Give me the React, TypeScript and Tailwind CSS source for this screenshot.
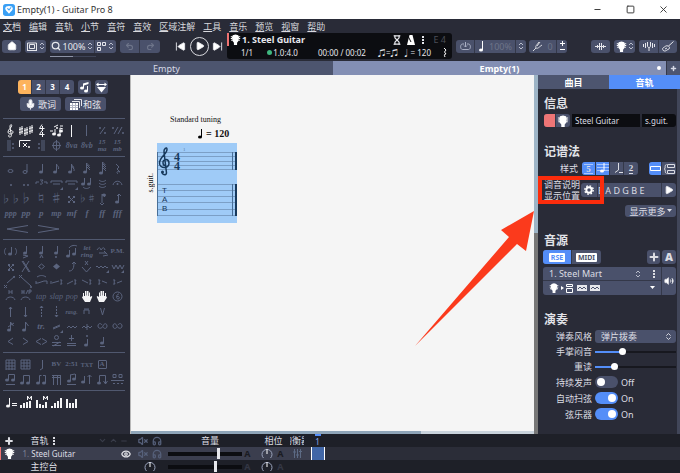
import { useState, type FC, type ReactNode } from "react";
import {
  ChevronDown,
  ChevronUp,
  ChevronsUpDown,
  Eye,
  Headphones,
  Home,
  Hourglass,
  Mic,
  Minus,
  MoreVertical,
  Play,
  Plus,
  Redo2,
  Search,
  SkipBack,
  SkipForward,
  Square,
  Undo2,
  Volume2,
  VolumeX,
  X,
} from "lucide-react";

// filled note head centred on x, y
const head = (x: number, y: number) =>
  `M${x - 2} ${y}a2 1.5 0 1 0 4 0a2 1.5 0 1 0 -4 0`;

const dot = (x: number, y: number) =>
  `M${x - 1} ${y}a1 1 0 1 0 2 0a1 1 0 1 0 -2 0`;

interface PaletteItem {
  name: string;
  stroke?: string;
  fill?: string;
  text?: string;
  sub?: string;
  textClass?: string;
  bright?: boolean;
}

const DYN = "font-['Liberation_Serif'] italic font-bold text-[9px]";
const TINY = "font-['Liberation_Serif'] italic text-[8px]";
const SERIF = "font-['Liberation_Serif'] font-bold text-[7px]";
const STACKED = "font-['Liberation_Serif'] italic font-bold text-[7px] leading-[7px]";

const CLEF =
  "M7 14c-2 0-2-2-.5-2M7 14c1 0 1.500-1 1.300-2L7 4c-.3-2 1.500-3.500 1.700-1.500C8.800 4.500 5 6.500 5 9c0 2.500 5 2.700 5 .2C10 7 6.500 7 6.700 9";

const PALETTE: PaletteItem[][][] = [
  [
    [
      { name: "Clef", stroke: CLEF, bright: true },
      {
        name: "Key signature",
        stroke:
          "M2 4v8M4 3v8M1 6.500l4-1M1 9.500l4-1M7 5v8M9 4v8M6 7.500l4-1M6 10.500l4-1M12 3v8M14 2v8M11 5.500l4-1M11 8.500l4-1",
        bright: true,
      },
      {
        name: "Time signature",
        stroke: "M8 1.500L5.500 5.500h5M8.500 3v5M8 7.500L5.500 11.500h5M8.500 9v5",
        bright: true,
      },
      {
        name: "Triplet feel",
        stroke: "M6 11V6M11 12V5l3 1M5 4l4-2M11 3h3M1 8h3",
        fill: head(5, 11) + head(10, 12) + head(12, 8) + dot(8, 5),
        bright: true,
      },
      { name: "Bar line", stroke: "M7.500 2v12", bright: true },
      { name: "Free bar", stroke: "M7.500 2v11" },
      { name: "Repeat bar", stroke: "M5 11l5-7", fill: dot(5, 5) + dot(10, 10) },
      {
        name: "Repeat two bars",
        stroke: "M4 11l4-7M8 11l4-7",
        fill: dot(3, 5) + dot(13, 10),
      },
    ],
    [
      { name: "Repeat open", stroke: "M5 2v11M7 2v11", fill: dot(10, 6) + dot(10, 10) },
      {
        name: "Alternate ending",
        stroke: "M1.500 9V2.500h11M5 5l4 4M9 5L5 9",
        fill: dot(11, 9),
        bright: true,
      },
      { name: "Repeat close", stroke: "M10 2v11M8 2v11", fill: dot(5, 6) + dot(5, 10) },
      { name: "Directions", stroke: "M7.500 2v11M3 7.500h9M4 7.500a3.500 4 0 1 0 7 0a3.500 4 0 1 0-7 0" },
      { name: "Octave up", text: "8va", textClass: "font-['Liberation_Serif'] italic font-bold text-[8px]" },
      { name: "Octave down", text: "8vb", textClass: "font-['Liberation_Serif'] italic font-bold text-[8px]" },
      { name: "Quindicesima up", text: "15", sub: "ma", textClass: STACKED },
      { name: "Quindicesima down", text: "15", sub: "mb", textClass: STACKED },
    ],
  ],
  [
    [
      { name: "Whole", stroke: "M5 10a2.500 1.500 0 1 0 5 0a2.500 1.500 0 1 0-5 0" },
      { name: "Half", stroke: "M5 11a2 1.500 0 1 0 4 0a2 1.500 0 1 0-4 0M9 11V3" },
      { name: "Quarter", stroke: "M8.500 11V3", fill: head(7, 11) },
      { name: "Eighth", stroke: "M7.500 11V3c0 2 3 2 2 5", fill: head(6, 11) },
      { name: "16th", stroke: "M7.500 11V3c0 2 3 2 2 5M8 5c0 2 3 2 2 5", fill: head(6, 11) },
      { name: "32nd", stroke: "M7.500 11V2l3 3M8 4l3 3M8 6l3 3", fill: head(6, 11) },
      { name: "64th", stroke: "M7.500 12V1l3 3M8 3l3 3M8 5l3 3M8 7l3 3", fill: head(6, 12) },
      { name: "Rest", stroke: "M6 3l3 3-2 2 3 3c-3-1-4 0-2 2" },
    ],
    [
      { name: "Dotted", fill: dot(8, 9) },
      { name: "Double dotted", fill: dot(6, 9) + dot(10, 9) },
      { name: "Triplet", stroke: "M2 8V6h3M10 6h3v2M6 4h3L7.500 6C9 6 9 9 6 8" },
      { name: "Tuplet", stroke: "M2 7V5h11v2M4 8h7", fill: "M14 11v3h-3z" },
      { name: "Custom tuplet", stroke: "M2 7V5h11v2M4 8h7", fill: "M14 11v3h-3z" },
      { name: "Tie", stroke: "M5.500 8V2M11.500 8V2M4 11c2 2 5 2 7 0", fill: head(4, 8) + head(10, 8) },
      { name: "Tie chord", stroke: "M4 4c2 2 5 2 7 0M4 7c2 2 5 2 7 0M4 10c2 2 5 2 7 0" },
      { name: "Fermata", stroke: "M3 9c1-5 8-5 9 0", fill: dot(7.5, 8) },
    ],
    [
      { name: "Double flat", text: "♭♭", textClass: "text-[10px]" },
      { name: "Flat", text: "♭", textClass: "text-[12px]" },
      { name: "Natural", text: "♮", textClass: "text-[12px]" },
      { name: "Sharp", text: "♯", textClass: "text-[12px]" },
      { name: "Double sharp", stroke: "M5 6l5 5M10 6l-5 5", fill: "M4 5h2v2H4zM9 5h2v2H9zM4 10h2v2H4zM9 10h2v2H9z" },
      { name: "Enharmonic", text: "♭♯", textClass: "text-[9px]" },
      { name: "Stem up", stroke: "M7 12V3M7 3l3 3M5 12l2 2 2-2", fill: head(9, 4) },
      { name: "Stem down", stroke: "M8.500 12V3M7 5l2-2 2 2", fill: head(7, 11) },
    ],
    [
      { name: "Pianississimo", text: "ppp", textClass: "font-['Liberation_Serif'] italic font-bold text-[8px]" },
      { name: "Pianissimo", text: "pp", textClass: DYN },
      { name: "Piano", text: "p", textClass: DYN },
      { name: "Mezzo-piano", text: "mp", textClass: "font-['Liberation_Serif'] italic font-bold text-[8px]" },
      { name: "Mezzo-forte", text: "mf", textClass: DYN },
      { name: "Forte", text: "f", textClass: DYN },
      { name: "Fortissimo", text: "ff", textClass: DYN },
      { name: "Fortississimo", text: "fff", textClass: DYN },
    ],
  ],
  [
    [
      { name: "Ghost note", stroke: "M3 4c-2 2-2 5 0 7M12 4c2 2 2 5 0 7M8.500 10V3", fill: head(7, 10) },
      { name: "Accent", stroke: "M8.500 9V2M5 11l5 1-5 2", fill: head(7, 9) },
      { name: "Heavy accent", stroke: "M8.500 9V2M6 14l1.500-3L9 14", fill: head(7, 9) },
      { name: "Staccato", stroke: "M8.500 9V2", fill: head(7, 9) + dot(7, 13) },
      { name: "Legato", stroke: "M5.500 12V6M11.500 10V4M5 4c2-3 6-3 8-2", fill: head(4, 12) + head(10, 10) },
      { name: "Let ring", text: "let", sub: "ring", textClass: STACKED },
      { name: "Let ring on chord", stroke: "M2 6c2-3 3-3 4 0M6 6c2-3 3-3 4 0M4 9h7M8 12l5-1M9 7l3 3" },
      { name: "Palm mute", text: "P.M.", textClass: SERIF },
    ],
    [
      { name: "Dead note", stroke: "M5 6l5 5M10 6l-5 5", fill: "M5 5h2v2H5zM9 5h2v2H9zM5 10h2v2H5zM9 10h2v2H9z" },
      { name: "Dead strum", stroke: "M4 2l7 11M11 2L4 13M5 2l7 11" },
      { name: "Natural harmonic", stroke: "M4.500 7.500l3-2.500 3 2.500-3 2.500z" },
      { name: "Artificial harmonic", fill: "M4 7.500l3.500-3 3.500 3-3.500 3z" },
      { name: "Bend", stroke: "M5 12c4 0 5-3 5-9M8 5l2-2 2 2" },
      { name: "Tremolo bar", stroke: "M3 8l4.500 5L12 8M6 2l3 4M9 2L6 6" },
      { name: "Vibrato", stroke: "M1 8q1-2 2 0t2 0 2 0 2 0 2 0 2 0", fill: "M14 11v3h-3z" },
      { name: "Wide vibrato", stroke: "M2 6l2 4 2-4 2 4 2-4 2 4 2-4", fill: "M14 11v3h-3z" },
    ],
    [
      { name: "Whammy dive", stroke: "M4 9l8-7M1 11l3 3M4 11l-3 3", fill: dot(11, 3) },
      { name: "Whammy dip", stroke: "M3 3l10 9M1 1l3 3M4 1L1 4", fill: dot(13, 13) },
      { name: "Legato slide", stroke: "M2 9h2l6-2h3M13 7v3M2 7v3M3 3c3-2 6-2 9 0" },
      { name: "Shift slide", stroke: "M2 7v3M3 9l7-2M11 6h2l-1 2 1 2h-2" },
      { name: "Slide out down", stroke: "M3 10l6-3M10 6h2l-1 2 1 2h-2" },
      { name: "Slide out up", stroke: "M3 6l6 3M10 6h2l-1 2 1 2h-2" },
      { name: "Slide in below", stroke: "M3 6h2L4 8l1 2H3M7 7l5 2" },
      { name: "Slide in above", stroke: "M3 6h2L4 8l1 2H3M7 9l5-2" },
    ],
    [
      { name: "Hammer on", stroke: "M3 11c1-4 8-4 9 0M6 1v4M9 1v4M6 3h3" },
      { name: "Hammer on and pull off", stroke: "M3 11c1-4 8-4 9 0M4 1v4M6 1v4M4 3h2M8 5l2-4M11 5V1h2v2h-2" },
      { name: "Tapping", text: "tap", textClass: TINY },
      { name: "Slap", text: "slap", textClass: TINY },
      { name: "Pop", text: "pop", textClass: TINY },
      {
        name: "Left hand fingering",
        fill: "M4 7V4h1v3h1V2h1.500v4.500h.5V2h1.500v5h.5V3.500h1V8l1.500-1 .8.8L11 13H6L3 8.500z",
        bright: true,
      },
      {
        name: "Right hand fingering",
        fill: "M11 7V4h-1v3H9V2H7.500v4.500H7V2H5.500v5H5V3.500H4V8L2.500 7l-.8.8L4 13h5l3-4.500z",
        bright: true,
      },
      { name: "String number", stroke: "M3 7.500a4.500 4.500 0 1 0 9 0a4.500 4.500 0 1 0-9 0M9 5c-3 0-3 5-1 5s2-3-1-2.500" },
    ],
    [
      { name: "Brush up", stroke: "M7.500 13V3M6 5l1.500-2L9 5" },
      { name: "Brush down", stroke: "M7.500 3v10M6 11l1.500 2L9 11" },
      { name: "Arpeggio up", stroke: "M7.500 2v2M7.500 5v2M7.500 8v2M7.500 11v2M6 4l1.500-2L9 4" },
      { name: "Arpeggio down", stroke: "M7.500 2v2M7.500 5v2M7.500 8v2M7.500 11v2M6 11l1.500 2L9 11" },
      { name: "Rasgueado", text: "rasg.", textClass: "font-['Liberation_Serif'] italic font-bold text-[6px]" },
      { name: "Pickstroke down", stroke: "M5 10V6h5v4M5 5h5" },
      { name: "Pickstroke up", stroke: "M5.500 4l2 7 2-7" },
    ],
    [
      { name: "Grace before beat", stroke: "M7.500 11V3l3 4M5 8l6-4", fill: head(6, 11) },
      { name: "Grace on beat", stroke: "M7.500 11V3l3 4", fill: head(6, 11) },
      { name: "Trill", text: "tr.", textClass: DYN },
      { name: "Tremolo picking", stroke: "M4 9l7-3M4 10l7-3", fill: "M14 11v3h-3z" },
      { name: "Upper mordent", stroke: "M3 9l2-2 2 2 2-2 2 2 2-2" },
      { name: "Lower mordent", stroke: "M3 9l2-2 2 2 2-2 2 2 2-2M8 5v6" },
      { name: "Turn", stroke: "M7 6c-1-2-4-2-4 1s4 3 5 0 4-3 4 0-3 3-4 1" },
      { name: "Inverted turn", stroke: "M8 6c1-2 4-2 4 1s-4 3-5 0-4-3-4 0 3 3 4 1" },
    ],
    [
      { name: "Crescendo fade", stroke: "M10 4L5 7.500l5 3" },
      { name: "Decrescendo fade", stroke: "M5 4l5 3.500-5 3" },
      { name: "Volume swell", stroke: "M7 4.500l-5 3 5 3M8 4.500l5 3-5 3" },
      { name: "Open wah", stroke: "M5.500 3.500a2 2 0 1 0 4 0a2 2 0 1 0-4 0M3 8.500h9M3 11.500h9M4 12l7-4" },
      { name: "Closed wah", stroke: "M7.500 1v6M5 4.500h5M3 9.500h9M3 11.500h9" },
      { name: "Golpe thumb", stroke: "M8.500 11V5", fill: head(7, 11) + dot(8, 2) },
      { name: "Golpe finger", stroke: "M8.500 9V3M5 12.500h5", fill: head(7, 9) },
    ],
  ],
  [
    [
      { name: "Chord diagram", stroke: "M3 3h9M3 6h9M3 9h9M3 12h9M3 3v10M6 3v10M9 3v10M12 3v10" },
      { name: "Scale diagram", stroke: "M3 3h9M3 6h9M3 9h9M3 12h9M3 3v9M6 3v9M9 3v9M12 3v9" },
      { name: "Slash", stroke: "M8.500 3v8M9 11l-3 2" },
      { name: "Barre", text: "BV", textClass: SERIF },
      { name: "Timer", text: "2:51", textClass: SERIF },
      { name: "Text", text: "TXT", textClass: "font-['Liberation_Serif'] font-bold text-[6px]" },
      { name: "Section", text: "A", textClass: "font-['Liberation_Serif'] font-bold text-[7px] border border-current px-px leading-[7px] rounded-[1px]" },
    ],
    [
      { name: "Automatic beam", stroke: "M5.500 8V2.500h6V8M3 12.500h9", fill: head(4, 8) + head(10, 8) },
      { name: "Force beam", stroke: "M5.500 11V3.500h6V11", fill: head(4, 11) + head(10, 11) },
      { name: "Break beam", stroke: "M5.500 11V3.500h2M9 3.500h2.500V11", fill: head(4, 11) + head(10, 11) },
      { name: "Break secondary beam", stroke: "M3 3.500h9M3 5.500h9M4.500 3v10M8.500 3v10M11.500 3v10" },
      { name: "Automatic stem", stroke: "M6.500 9V3M11.500 7V2M3 12.500h9M6 3l5-1", fill: head(5, 9) + head(10, 7) },
      { name: "Invert stem", stroke: "M5.500 11V4M10.500 12V3M8.500 5l2-2 2 2", fill: head(4, 10) },
      { name: "Flip beam", stroke: "M4.500 12V3.500h6V12M8.500 9l2 3 2-3", fill: head(4, 11) },
      { name: "Group staves", stroke: "M1 8.500h13M3 2.500h3v3H3zM9 2.500h3v3H9zM3 11.500h2M7 11.500h2M11 11.500h2" },
    ],
  ],
  [
    [
      { name: "Tempo", stroke: "M6.500 11V3M9 8.500h5M9 10.500h5", fill: head(5, 11), bright: true },
      { name: "Master volume", stroke: "M9.500 5V1l2 3 2-3v4", fill: "M2 10h2v3H2zM5 8h2v5H5zM8 7h2v6H8zM11 6h2v7h-2z", bright: true },
      { name: "Master pan", stroke: "M9.500 5V1l2 3 2-3v4", fill: "M2 5h2v8H2zM5 9h2v4H5zM8 10h2v3H8zM11 7h2v6h-2z", bright: true },
      { name: "Track volume", fill: "M2 11h2v2H2zM5 8h2v5H5zM8 6h2v7H8zM11 3h2v10h-2z", bright: true },
      { name: "Track pan", fill: "M2 4h2v9H2zM5 8h2v5H5zM8 8h2v5H8zM11 4h2v9h-2z", bright: true },
    ],
  ],
];

const PaletteButton: FC<{ item: PaletteItem }> = ({ item }) => (
  <button
    aria-label={item.name}
    className={`flex h-[15px] min-w-0 items-center justify-center whitespace-nowrap ${
      item.bright ? "text-[#f4f4f6]" : "text-[#5b647e]"
    }`}
  >
    {item.text ? (
      <span className={`flex flex-col items-center ${item.textClass}`}>
        <span>{item.text}</span>
        {item.sub && <span>{item.sub}</span>}
      </span>
    ) : (
      <svg width="15" height="15" viewBox="0 0 15 15" className="shrink-0">
        {item.stroke && <path d={item.stroke} fill="none" stroke="currentColor" />}
        {item.fill && <path d={item.fill} fill="currentColor" />}
      </svg>
    )}
  </button>
);

const HeadstockIcon: FC<{ size?: number }> = ({ size = 13 }) => (
  <svg width={size} height={size} viewBox="0 0 14 14" fill="#fff" className="shrink-0">
    <path d="M3.500 1.500L7 .5l3.500 1L11.500 4l-.8 5L9 11v3H5v-3L3.300 9 2.500 4z" />
    <path d="M1 3h2v1.200H1zM1 5.200h2v1.200H1zM1.500 7.400h2v1.200h-2zM11 3h2v1.200h-2zM11 5.200h2v1.200h-2zM10.500 7.400h2v1.200h-2z" />
  </svg>
);

const UpDown: FC = () => (
  <svg width="6" height="8" viewBox="0 0 6 8" fill="none" stroke="#b9bdcc" className="shrink-0">
    <path d="M1 3l2-2 2 2M1 5l2 2 2-2" />
  </svg>
);

const DotsIcon: FC<{ className?: string }> = ({ className = "" }) => (
  <svg width="2" height="8" viewBox="0 0 2 8" fill="currentColor" className={`shrink-0 ${className}`}>
    <path d="M0 0h2v2H0zM0 3h2v2H0zM0 6h2v2H0z" />
  </svg>
);

const Group: FC<{ className?: string; children: ReactNode }> = ({ className = "", children }) => (
  <div
    className={`flex h-[13px] items-center divide-x divide-[#343849] overflow-hidden rounded-[3px] bg-[#4a516b] ${className}`}
  >
    {children}
  </div>
);

const ToolButton: FC<{ label: string; className?: string; children: ReactNode }> = ({
  label,
  className = "",
  children,
}) => (
  <button aria-label={label} className={`flex h-full items-center justify-center ${className}`}>
    {children}
  </button>
);

const TitleBar: FC = () => (
  <header className="flex h-[19px] items-center bg-white pl-[3px] text-[9px] text-[#333]">
    <svg width="12" height="12" viewBox="0 0 11 11" className="mr-0.5">
      <rect width="11" height="11" rx="2.500" fill="#3aa0f5" />
      <path d="M2 4c0-3 7-3 7 0 0 2-2 3-3.500 5C4 7 2 6 2 4z" fill="#fff" />
      <path d="M4 4l1.500 1.500L7.500 3" fill="none" stroke="#3aa0f5" />
    </svg>
    <h1 className="flex-1">Empty(1) - Guitar Pro 8</h1>
    <button aria-label="Minimize" className="flex w-[33px] justify-center">
      <Minus size={9} strokeWidth={2.5} />
    </button>
    <button aria-label="Maximize" className="flex w-[33px] justify-center">
      <Square size={9} strokeWidth={2.5} />
    </button>
    <button aria-label="Close" className="flex w-[33px] justify-center">
      <X size={11} strokeWidth={2} />
    </button>
  </header>
);

const MENUS = ["文档", "编辑", "音轨", "小节", "音符", "音效", "区域注解", "工具", "音乐", "预览", "视窗", "帮助"];

const Toolbar: FC = () => (
  <div className="h-[42px]">
    <nav className="flex h-[14px] items-center gap-2 pl-[3px] text-[9px] text-[#d8d9de]">
      {MENUS.map((menu) => (
        <button key={menu}>
          <span className="underline underline-offset-1">{menu[0]}</span>
          {menu.slice(1)}
        </button>
      ))}
    </nav>
    <div className="flex h-[26px] items-center pr-[3px] pl-0.5 text-[9px] text-[#e6e7ec]">
      <Group className="mr-1">
        <ToolButton label="Home" className="w-[19px]">
          <Home size={10} fill="#fff" />
        </ToolButton>
      </Group>
      <Group className="mr-1">
        <ToolButton label="View mode" className="w-[21px] gap-0.5">
          <svg width="10" height="9" viewBox="0 0 10 9">
            <path d="M.5 8V1h9v7M2.500 2.500h5v4h-5zM0 8.500h10" fill="none" stroke="currentColor" />
          </svg>
          <UpDown />
        </ToolButton>
      </Group>
      <div className="relative mr-1">
        <Group>
          <ToolButton label="Zoom" className="w-[45px] gap-0.5">
            <Search size={10} strokeWidth={3} />
            100%
            <UpDown />
          </ToolButton>
          <ToolButton label="Layout" className="w-[21px] gap-0.5">
            <svg width="9" height="9" viewBox="0 0 9 9">
              <path d="M.5.5h3v3h-3zM5.500.5h3v3h-3zM.5 5.500h3v3h-3z" fill="none" stroke="currentColor" />
            </svg>
            <UpDown />
          </ToolButton>
        </Group>
        <div className="absolute top-4 left-0 flex h-px w-[46px] bg-[#3f4457]">
          <div className="w-1/2 bg-[#8d93a6]" />
        </div>
      </div>
      <Group className="mr-[15px] text-[#6d7489]">
        <ToolButton label="Undo" className="w-5">
          <Undo2 size={9} strokeWidth={3} />
        </ToolButton>
        <ToolButton label="Redo" className="w-5">
          <Redo2 size={9} strokeWidth={3} />
        </ToolButton>
      </Group>
      <button aria-label="First bar" className="mr-1">
        <SkipBack size={11} fill="#fff" />
      </button>
      <button
        aria-label="Play"
        className="flex size-[19px] items-center justify-center rounded-full border border-[#d8d9de]"
      >
        <Play size={10} fill="#fff" />
      </button>
      <button aria-label="Last bar" className="mr-1 ml-[3px]">
        <SkipForward size={11} fill="#fff" />
      </button>
      <div className="flex h-[26px] min-w-0 flex-1 flex-col rounded-[3px] bg-[#0c0d11]">
        <div className="flex h-[13px] items-center border-l-2 border-[#ef7372] pr-1.5 pl-px">
          <HeadstockIcon size={11} />
          <span className="ml-px flex-1 text-[9px] font-bold">1. Steel Guitar</span>
          <Hourglass size={10} strokeWidth={3} />
          <svg width="10" height="10" viewBox="0 0 10 10" className="mx-1">
            <path d="M3.500 0h3L9 10H1z" fill="#fff" />
            <path d="M5 7L2 1" stroke="#0c0d11" />
          </svg>
          <DotsIcon className="mx-0.5" />
          <span className="ml-2 text-[#4b4e58]">E 4</span>
        </div>
        <div className="flex h-[13px] items-center pr-[5px] pl-3.5 text-[8px]">
          <span>1/1</span>
          <span className="ml-3.5 flex items-center gap-px">
            <i className="size-[5px] rounded-full bg-[#3fb77f]" />
            1.0:4.0
          </span>
          <span className="ml-5">00:00 / 00:02</span>
          <span className="ml-auto">♫=♫</span>
          <span className="mr-3 ml-1">♩= 120</span>
          <svg width="4" height="9" viewBox="0 0 4 9" fill="none" stroke="#fff">
            <path d="M1 0l2 2-1.500 2L3 6c-2 0-2 1-1 3" />
          </svg>
        </div>
      </div>
      <Group className="ml-1">
        <ToolButton label="Loop" className="w-[19px]">
          <svg width="11" height="9" viewBox="0 0 11 9" fill="none" stroke="#aab0c4">
            <path d="M4 2H2.500C0 2 0 7.500 2.500 7.500h6C11 7.500 11 2 8.500 2H7M5.500 0v5M4 3.500L5.500 5 7 3.500" />
          </svg>
        </ToolButton>
        <ToolButton label="Speed" className="w-[41px] gap-1 text-[#6d7489]">
          <svg width="7" height="11" viewBox="0 0 7 11" fill="#fff">
            <path d={head(3, 9)} />
            <path d="M4 0h1v9H4z" />
          </svg>
          100%
        </ToolButton>
        <ToolButton label="Speed step" className="w-2.5">
          <UpDown />
        </ToolButton>
      </Group>
      <Group className="ml-[3px]">
        <ToolButton label="Tuning fork" className="w-7 gap-1 text-[#6d7489]">
          <svg width="11" height="11" viewBox="0 0 11 11" fill="none" stroke="#d8d9de">
            <path d="M1 10l3-3M4 7c-1-2 1-3 3-6M4 7c2 1 3-1 6-3M5 5l3-4" />
          </svg>
          0
        </ToolButton>
        <ToolButton label="Transpose" className="w-2.5">
          <svg width="5" height="10" viewBox="0 0 5 10" stroke="#fff">
            <path d="M0 2.500h5M2.500 0v5M0 8.500h5" />
          </svg>
        </ToolButton>
      </Group>
      <Group className="mr-1 ml-6">
        <ToolButton label="Line in" className="w-[19px]">
          <svg width="11" height="9" viewBox="0 0 11 9" fill="none" stroke="currentColor">
            <path d="M0 4.500h11M2.500 3v3M4.500 1v7M6.500 1v7M8.500 3v3" />
          </svg>
        </ToolButton>
      </Group>
      <Group className="mr-1">
        <ToolButton label="Instrument view" className="w-[21px] gap-px">
          <HeadstockIcon size={11} />
          <UpDown />
        </ToolButton>
      </Group>
      <Group>
        <ToolButton label="Tuner" className="w-5">
          <svg width="12" height="11" viewBox="0 0 12 11" fill="none" stroke="currentColor">
            <path d="M4.500 1v4c0 2 3 2 3 0V1M6 6.500V10M2.500 2v5M9.500 2v5M.5 3v3M11.500 3v3" />
          </svg>
        </ToolButton>
        <ToolButton label="Guitar" className="w-[18px]">
          <svg width="12" height="11" viewBox="0 0 12 11" fill="none" stroke="currentColor">
            <path d="M11.500.5L6 5.500M6 5C4 4 3 6 1.500 6.500s-1 3.500 1 3.500 2-1 3.500-1.500 2-2 1-3M3 8l2-1" />
          </svg>
        </ToolButton>
      </Group>
    </div>
  </div>
);

const DocumentTabs: FC = () => (
  <div className="flex h-[14px] text-[9px] text-[#d7dae6]">
    <button className="flex-1 bg-[#4d556f]">Empty</button>
    <button className="relative flex-1 bg-[#838fb4] font-bold text-white">
      Empty(1)
      <i className="absolute top-[5px] right-[5px] size-1 rounded-full bg-white" />
    </button>
    <button aria-label="New tab" className="flex w-[14px] items-center justify-center border-l border-[#343849] bg-[#4d556f]">
      <Plus size={7} strokeWidth={5} />
    </button>
  </div>
);

const Palette: FC = () => {
  const [voice, setVoice] = useState(1);

  return (
    <aside className="w-[130px] shrink-0 px-[3px] pt-[5px]">
      <div className="flex justify-center gap-1 pr-1">
        <div className="flex h-[14px] divide-x divide-[#343849] overflow-hidden rounded-[3px] bg-[#4a516b] text-[8px] font-bold text-white">
          {[1, 2, 3, 4].map((n) => (
            <button
              key={n}
              onClick={() => setVoice(n)}
              className={`w-[14px] ${voice === n ? "bg-[#fdb35c]" : ""}`}
            >
              {n}
            </button>
          ))}
        </div>
        <button aria-label="Multivoice" className="flex h-[14px] w-[13px] items-center justify-center rounded-[3px] bg-[#4a516b]">
          <svg width="11" height="11" viewBox="0 0 11 11" fill="#fff">
            <path d={head(3, 6) + head(7, 9)} />
            <path d="M4 1.500L9.500 0v2L5 3.500V6H4zM8 4h1v5H8z" />
          </svg>
        </button>
        <button aria-label="Filter" className="flex h-[14px] w-[13px] items-center justify-center rounded-[3px] bg-[#4a516b]">
          <svg width="11" height="11" viewBox="0 0 11 11" fill="#fff">
            <path d="M1 5h9l-4.500 5.500zM0 2.500L2.500.5v1.500h6V.5L11 2.500l-2.500 2V3h-6v1.500z" />
          </svg>
        </button>
      </div>
      <div className="mt-[3px] mb-[7px] flex justify-center gap-1 pr-1 text-[9px] text-[#e6e7ec]">
        <button className="flex h-[14px] w-[41px] items-center justify-center gap-0.5 rounded-[3px] bg-[#4a516b]">
          <Mic size={11} fill="#fff" strokeWidth={2.5} />
          歌词
        </button>
        <button className="flex h-[14px] w-[41px] items-center justify-center gap-px rounded-[3px] bg-[#4a516b]">
          <svg width="12" height="11" viewBox="0 0 12 11">
            <path d="M4 .5h7.500V7M2 2.500h7.500V9" stroke="#e6e7ec" fill="none" />
            <path d="M0 4h8v7H0z" fill="#fff" />
            <path d="M2.500 4v7M5.500 4v7M0 6.500h8M0 8.500h8" stroke="#b0b4c4" />
          </svg>
          和弦
        </button>
      </div>
      {PALETTE.map((rows, s) => (
        <section key={s} className="mr-0.5 border-t border-[#50586f] pt-1 pb-[3px]">
          {rows.map((row, r) => (
            <div key={r} className="grid grid-cols-8">
              {row.map((item) => (
                <PaletteButton key={item.name} item={item} />
              ))}
            </div>
          ))}
          {s === 1 && (
            <div className="flex h-[15px] items-center gap-2 pl-[3px] text-[#5b647e]">
              <button aria-label="Crescendo">
                <svg width="23" height="8" viewBox="0 0 23 8" fill="none" stroke="currentColor">
                  <path d="M22 .5L1 4l21 3.500" />
                </svg>
              </button>
              <button aria-label="Decrescendo">
                <svg width="23" height="8" viewBox="0 0 23 8" fill="none" stroke="currentColor">
                  <path d="M1 .5L22 4 1 7.500" />
                </svg>
              </button>
            </div>
          )}
        </section>
      ))}
    </aside>
  );
};

const STAFF = [9, 13, 18, 22, 26];
const TAB_STAFF = [41, 47, 53, 59, 66, 72];

const Score: FC = () => (
  <main className="flex min-w-0 flex-1 flex-col border-l border-[#b9b9b9] bg-[#f5f5f5]">
    <div className="flex-1 pt-10 pl-3.5 font-['Liberation_Serif'] text-[#111]">
      <p className="ml-[25px] text-[8px] leading-[10px]">Standard tuning</p>
      <p className="mt-1 ml-[53px] flex items-center gap-[3px] text-[10px] leading-[10px] font-bold">
        <svg width="5" height="10" viewBox="0 0 5 10">
          <path d={head(2, 8)} />
          <path d="M3 0h1v8H3z" />
        </svg>
        = 120
      </p>
      <div className="mt-1 flex items-center">
        <span className="w-3 rotate-180 text-[8px] leading-[12px] [writing-mode:vertical-rl]">s.guit.</span>
        <svg width="80" height="80" viewBox="0 0 80 80" fill="#17395c">
          <rect width="80" height="80" fill="#9fcbf7" />
          {[...STAFF, ...TAB_STAFF].map((y) => (
            <path key={y} d={`M0 ${y + 0.5}h80`} stroke="#7b9fc6" />
          ))}
          <path d="M0.500 9v64M75.500 9v18M75.500 41v32" stroke="#486f98" />
          <path d="M78 9h2v18h-2zM78 41h2v32h-2z" />
          <path
            d="M5.500 29c-1.500 2.500 4 4 4 1L7 9c-.5-3 3-6 3-2.500C10 11 2.500 14 2.500 20c0 6 10 6 9.500 0-.5-5-6.500-4-6 0 .2 2 1.500 2.500 2 2.500"
            fill="none"
            stroke="#17395c"
            strokeWidth="1.500"
          />
          <path d="M4 29a1.500 1.500 0 1 0 3 0a1.500 1.500 0 1 0-3 0" />
          <text fontSize="12" fontWeight="bold">
            <tspan x="17" y="18">4</tspan>
            <tspan x="17" y="27">4</tspan>
          </text>
          <text x="26" y="8" fontSize="5" fill="#5b7fa6">1</text>
          <g fontFamily="Liberation Sans" fontSize="8">
            <text x="5" y="50">T</text>
            <text x="5" y="59">A</text>
            <text x="5" y="68">B</text>
          </g>
        </svg>
      </div>
    </div>
    <div className="flex h-[3px] bg-[#c9d3dc]">
      <div className="w-[72%] bg-[#8fa5b8]" />
    </div>
  </main>
);

const Toggle: FC<{ label: string; initial: boolean }> = ({ label, initial }) => {
  const [on, setOn] = useState(initial);

  return (
    <label className="relative flex h-4 items-center gap-[3px]">
      <span className="w-12 text-right">{label}</span>
      <input type="checkbox" checked={on} onChange={() => setOn(!on)} className="peer sr-only" />
      <span className="flex h-3 w-[23px] items-center rounded-full bg-[#4a516b] px-0.5 peer-checked:justify-end peer-checked:bg-[#548ef8]">
        <i className="size-2 rounded-full bg-white" />
      </span>
      <span>{on ? "On" : "Off"}</span>
    </label>
  );
};

const RangeRow: FC<{ label: string; initial: number }> = ({ label, initial }) => {
  const [value, setValue] = useState(initial);

  return (
    <label className="flex h-[15px] items-center gap-[3px]">
      <span className="w-12 text-right">{label}</span>
      <span className="relative flex h-2 flex-1 items-center">
        <span className="h-0.5 w-full bg-[#17181f]">
          <span className="block h-full bg-[#548ef8]" style={{ width: `${value}%` }} />
        </span>
        <input
          type="range"
          value={value}
          onChange={(e) => setValue(Number(e.target.value))}
          className="absolute inset-0 h-2 w-full appearance-none bg-transparent [&::-webkit-slider-thumb]:size-[7px] [&::-webkit-slider-thumb]:appearance-none [&::-webkit-slider-thumb]:rounded-full [&::-webkit-slider-thumb]:bg-white"
        />
      </span>
    </label>
  );
};

const HEADING = "text-[12px] leading-[14px] font-bold text-[#e2e3e8]";

const Inspector: FC = () => (
  <aside className="flex w-[146px] shrink-0 text-[9px] text-[#dcdde3]">
    <div className="flex w-1 flex-col bg-[#777]">
      <div className="h-[44%] bg-[#9db4c6]" />
    </div>
    <div className="flex min-w-0 flex-1 flex-col">
      <div className="flex h-[14px] font-bold text-white">
        <button className="flex-1 bg-[#4d556f]">曲目</button>
        <button className="flex-1 bg-[#548ef8]">音轨</button>
      </div>
      <div className="flex-1 border-r-[3px] border-[#414659] pr-px pl-1.5">
        <h2 className={`pt-2 ${HEADING}`}>信息</h2>
        <div className="mt-[3px] flex h-[13px] gap-0.5 text-[8px]">
          <Group>
            <ToolButton label="Track color" className="w-3 bg-[#ee7576]">
              {null}
            </ToolButton>
            <ToolButton label="Track icon" className="w-3.5">
              <HeadstockIcon size={12} />
            </ToolButton>
          </Group>
          <input
            aria-label="Track name"
            defaultValue="Steel Guitar"
            className="w-0 flex-[2] bg-[#0c0d11] px-[3px]"
          />
          <input
            aria-label="Short name"
            defaultValue="s.guit."
            className="w-0 flex-1 rounded-r-[3px] bg-[#0c0d11] pl-[3px]"
          />
        </div>

        <h2 className={`mt-[18px] ${HEADING}`}>记谱法</h2>
        <div className="mt-[3px] flex h-[13px] items-center">
          <span className="mr-1 w-[34px] text-right">样式</span>
          <Group className="font-['Liberation_Serif'] font-bold">
            <ToolButton label="Tablature" className="w-3.5 bg-[#548ef8]">
              <span className="border-y border-[#a9c6fb] px-0.5 leading-[8px]">5</span>
            </ToolButton>
            <ToolButton label="Standard notation" className="w-3.5 bg-[#548ef8]">
              <svg width="12" height="11" viewBox="0 0 12 11">
                <path d="M0 1.500h12M0 4.500h12M0 7.500h12" stroke="#a9c6fb" />
                <path d={head(5, 8)} fill="#fff" />
                <path d="M7 0v8" stroke="#fff" />
              </svg>
            </ToolButton>
            <ToolButton label="Slash" className="w-3.5">
              <svg width="12" height="11" viewBox="0 0 12 11" fill="none" stroke="currentColor">
                <path d="M7.500 0v7L4 9.500M8 9.500h4" />
              </svg>
            </ToolButton>
            <ToolButton label="Numbered notation" className="w-3.5">
              <span className="border-b leading-[9px]">2</span>
            </ToolButton>
          </Group>
          <Group className="ml-auto">
            <ToolButton label="Single staff" className="w-[13px] bg-[#548ef8]">
              <svg width="11" height="7" viewBox="0 0 11 7" fill="none" stroke="#fff">
                <path d="M.5 1.500h10v4H.5z" />
              </svg>
            </ToolButton>
            <ToolButton label="Grand staff" className="w-[14px]">
              <svg width="11" height="10" viewBox="0 0 11 10" fill="none" stroke="currentColor">
                <path d="M3.500.5h7v3h-7zM3.500 6.500h7v3h-7zM2.500.5C0 1 2 4 .5 5c1.500 1 0 4 2 4.500" />
              </svg>
            </ToolButton>
          </Group>
        </div>
        <div className="relative mt-1 flex h-[22px] items-center">
          <span className="mr-px w-9 leading-[11px] whitespace-nowrap">
            调音说明
            <br />
            显示位置
          </span>
          <Group className="h-[14px] flex-1">
            <ToolButton label="Tuning settings" className="w-[17px]">
              <svg width="10" height="10" viewBox="0 0 10 10" fill="none" stroke="#fff">
                <circle cx="5" cy="5" r="2.700" strokeWidth="2" />
                <circle cx="5" cy="5" r="4.200" strokeWidth="1.400" strokeDasharray="1.650 1.650" />
              </svg>
            </ToolButton>
            <button className="h-full flex-1 text-left">E A D G B E</button>
            <ToolButton label="Listen" className="w-3.5">
              <Play size={10} fill="#fff" />
            </ToolButton>
          </Group>
          <div className="absolute -top-[3px] -left-1.5 h-7 w-[66px] border-4 border-[#fb2c0c]" />
        </div>
        <button className="mt-1 ml-auto flex h-3 w-[51px] items-center justify-center gap-px rounded-[3px] bg-[#4a516b]">
          显示更多
          <svg width="5" height="4" viewBox="0 0 5 4" fill="currentColor">
            <path d="M0 0h5L2.500 3z" />
          </svg>
        </button>

        <h2 className={`mt-[17px] ${HEADING}`}>音源</h2>
        <div className="mt-0.5 -ml-px flex justify-between">
          <Group className="h-[14px] text-[7px] font-bold">
            <button className="h-full w-[29px] bg-[#548ef8]">
              <span className="rounded-[1px] bg-white px-0.5 text-[#548ef8]">RSE</span>
            </button>
            <button className="h-full w-[29px]">
              <span className="rounded-[1px] bg-white px-0.5 text-[#4a516b]">MIDI</span>
            </button>
          </Group>
          <div className="flex gap-0.5">
            <button aria-label="Add sound" className="flex h-[14px] w-[13px] items-center justify-center rounded-[3px] bg-[#4a516b]">
              <Plus size={12} strokeWidth={4} />
            </button>
            <button aria-label="Automation" className="h-[14px] w-[14px] rounded-[3px] bg-[#4a516b] text-[11px] leading-[14px] font-black">
              A
            </button>
          </div>
        </div>
        <div className="mt-[3px] -ml-px flex h-7 divide-x divide-[#343849] overflow-hidden rounded-[3px] bg-[#4a516b]">
          <div className="flex-1 divide-y divide-[#343849]">
            <div className="flex h-[14px] items-center pr-1.5 pl-1.5">
              <button className="flex flex-1 items-center justify-between">
                1. Steel Mart
                <UpDown />
              </button>
              <button aria-label="Sound menu" className="ml-3">
                <DotsIcon />
              </button>
            </div>
            <button aria-label="Effect chain" className="flex h-[14px] w-full items-center gap-0.5 pr-1.5 pl-1.5">
              <HeadstockIcon size={10} />
              <svg width="3" height="4" viewBox="0 0 3 4" fill="#fff">
                <path d="M0 0l3 2-3 2z" />
              </svg>
              <svg width="7" height="9" viewBox="0 0 7 9" fill="none" stroke="#fff">
                <path d="M.5.5h6v2h-6zM.5 4.500h6v4h-6z" />
              </svg>
              <svg width="24" height="6" viewBox="0 0 24 6" className="ml-0.5">
                <path d="M0 0h10v6H0zM13 0h10v6H13z" fill="#e6e7ec" />
                <path d="M1 4l2-2 2 2 2-2 2 2M14 4l2-2 2 2 2-2 2 2" fill="none" stroke="#4a516b" />
              </svg>
              <svg width="5" height="4" viewBox="0 0 5 4" fill="#fff" className="ml-auto">
                <path d="M0 0h5L2.500 3z" />
              </svg>
            </button>
          </div>
          <ToolButton label="Output" className="w-[14px]">
            <Volume2 size={10} fill="#fff" />
          </ToolButton>
        </div>

        <h2 className={`mt-[18px] mb-px ${HEADING}`}>演奏</h2>
        <label className="flex h-4 items-center gap-[3px]">
          <span className="w-12 text-right">弹奏风格</span>
          <span className="relative flex-1">
            <select className="block h-[13px] w-full appearance-none rounded-[3px] bg-[#4a516b] pl-1.5 leading-[13px]">
              <option>弹片拨奏</option>
            </select>
            <ChevronsUpDown size={9} strokeWidth={2.5} className="absolute top-0.5 right-[3px]" />
          </span>
        </label>
        <RangeRow label="手掌闷音" initial={32} />
        <RangeRow label="重读" initial={22} />
        <Toggle label="持续发声" initial={false} />
        <Toggle label="自动扫弦" initial={true} />
        <Toggle label="弦乐器" initial={true} />
      </div>
    </div>
  </aside>
);

const Knob: FC<{ label: string }> = ({ label }) => (
  <button aria-label={label} className="flex justify-center">
    <svg width="12" height="11" viewBox="0 0 12 11" fill="none">
      <path d="M2.500 10a5 5 0 1 1 7 0" stroke="#9aa3bb" />
      <path d="M6 1v5" stroke="#fff" />
    </svg>
  </button>
);

const Fader: FC<{ label: string; value: number }> = ({ label, value }) => (
  <input
    type="range"
    aria-label={label}
    defaultValue={value}
    className="block h-1 w-[74px] appearance-none bg-[#0c0d11] [&::-webkit-slider-thumb]:h-[11px] [&::-webkit-slider-thumb]:w-[3px] [&::-webkit-slider-thumb]:appearance-none [&::-webkit-slider-thumb]:bg-[#e6e7ec]"
  />
);

const MuteSolo: FC = () => (
  <span className="flex gap-1 pl-0.5 text-[#56607a]">
    <VolumeX size={10} strokeWidth={3} />
    <Headphones size={10} strokeWidth={3} />
  </span>
);

const TrackTable: FC = () => (
  <table className="w-full table-fixed border-collapse bg-[#1e2028] text-left text-[9px] leading-[12px] text-[#dcdde3] [&_td]:p-0 [&_th]:p-0 [&_th]:font-normal">
    <colgroup>
      <col className="w-[22px]" />
      <col className="w-[75px]" />
      <col className="w-[38px]" />
      <col className="w-[32px]" />
      <col className="w-[85px]" />
      <col className="w-[37px]" />
      <col className="w-[21px]" />
      <col />
    </colgroup>
    <thead>
      <tr className="h-[13px]">
        <th>
          <button aria-label="Add track" className="block pl-[3px]">
            <Plus size={10} strokeWidth={5} />
          </button>
        </th>
        <th>
          <span className="flex items-center gap-1 pl-2">
            音轨
            <DotsIcon />
          </span>
        </th>
        <th>
          <span className="flex items-center gap-0.5 text-[#3a3d4a]">
            <ChevronDown size={9} strokeWidth={3} />
            <ChevronUp size={9} strokeWidth={3} />
            <Minus size={8} strokeWidth={3} />
          </span>
        </th>
        <th>
          <MuteSolo />
        </th>
        <th className="!text-center">音量</th>
        <th className="!pl-3">相位</th>
        <th>
          <span className="flex w-[14px] justify-center overflow-hidden whitespace-nowrap">均衡器</span>
        </th>
        <th className="!pl-1">
          <span className="block w-1.5 border-t-2 border-[#548ef8] text-center text-[8px] leading-[11px] text-[#8fb0f0]">1</span>
        </th>
      </tr>
    </thead>
    <tbody>
      <tr className="h-[13px] bg-[#3b3e4e]">
        <td className="border-l border-[#ef7372] !pl-[3px]">
          <HeadstockIcon size={11} />
        </td>
        <td className="text-[8px] whitespace-nowrap">
          <span className="text-[#7d8396]">1.</span> Steel Guitar
        </td>
        <td>
          <button aria-label="Show track" className="ml-[23px] block">
            <Eye size={10} strokeWidth={3} />
          </button>
        </td>
        <td>
          <MuteSolo />
        </td>
        <td>
          <span className="flex items-center justify-between pr-0.5 font-bold text-[#1a1b22]">
            <Fader label="Steel Guitar volume" value={70} />
            A
          </span>
        </td>
        <td>
          <span className="flex items-center justify-between pr-1.5 pl-2 font-bold text-[#1a1b22]">
            <Knob label="Steel Guitar pan" />
            A
          </span>
        </td>
        <td>
          <svg width="9" height="9" viewBox="0 0 9 9" stroke="#5d6b85" className="ml-[3px]">
            <path d="M1.500 0v9M4.500 0v9M7.500 0v9M0 3h3M3 6h3M6 2.500h3" />
          </svg>
        </td>
        <td className="bg-[#2b2d38]">
          <span className="block h-[13px] w-[14px] border-x border-white bg-[#4166a6]" />
        </td>
      </tr>
      <tr className="h-[13px]">
        <td />
        <td>
          <span className="pl-2">主控台</span>
        </td>
        <td />
        <td>
          <span className="flex pl-2">
            <Knob label="Master pan" />
          </span>
        </td>
        <td>
          <span className="flex items-center justify-between pr-0.5 font-bold text-[#343744]">
            <Fader label="Master volume" value={66} />
            A
          </span>
        </td>
        <td>
          <span className="flex items-center justify-between pr-1.5 pl-2 font-bold text-[#343744]">
            <Knob label="Master balance" />
            A
          </span>
        </td>
        <td />
        <td />
      </tr>
    </tbody>
  </table>
);

const App: FC = () => (
  <div className="relative flex min-h-screen flex-col bg-[#292b37] font-['Noto_Sans','Noto_Sans_CJK_SC',sans-serif] leading-none">
    <TitleBar />
    <Toolbar />
    <DocumentTabs />
    <div className="flex flex-1">
      <Palette />
      <Score />
      <Inspector />
    </div>
    <TrackTable />
    <svg
      width="120"
      height="136"
      viewBox="0 0 120 136"
      className="pointer-events-none absolute top-[211px] right-[145px]"
    >
      <path d="M0 135L94 26 86 19 119 0 111 40 102 33z" fill="#fb3a1c" />
    </svg>
  </div>
);

export default App;
